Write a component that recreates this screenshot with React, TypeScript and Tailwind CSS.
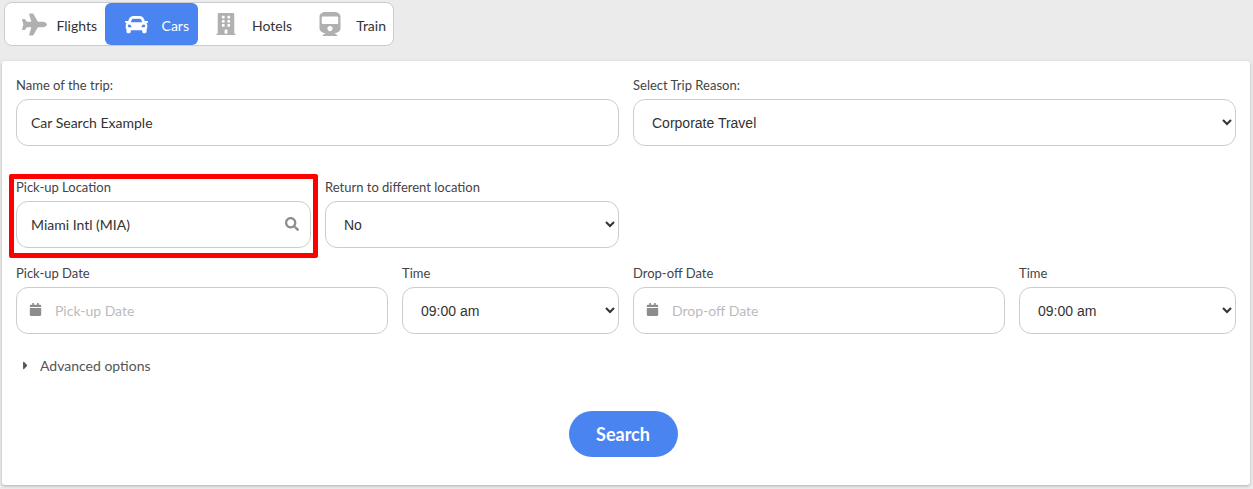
import type { ReactNode } from "react";
import { FaBuilding, FaCalendar, FaCar, FaCaretRight, FaPlane, FaSearch, FaTrain } from "react-icons/fa";

const fieldClass =
  "h-[47px] w-full rounded-xl border border-[#ccc] bg-white text-[14px] text-[#333] outline-none";
const selectClass = `${fieldClass} pl-[14px] pr-1 font-['Liberation_Sans',Arial,sans-serif]`;

const times = ["09:00 am", "09:30 am", "10:00 am"];

function Field({ label, children }: { label: string; children: ReactNode }) {
  return (
    <div className="min-w-0">
      <label className="block h-[23px] text-[13px] leading-[18px] text-[#444]">{label}</label>
      {children}
    </div>
  );
}

function Tab({
  icon,
  label,
  active,
  className,
}: {
  icon: ReactNode;
  label: string;
  active?: boolean;
  className: string;
}) {
  return (
    <div
      className={`flex h-[42px] items-center justify-end rounded-md text-[14px] ${className} ${
        active ? "bg-[#4a84f1] text-white" : "text-[#333]"
      }`}
    >
      <span className={active ? "text-white" : "text-[#b0b0b0]"}>{icon}</span>
      <span className="pt-[2px]">{label}</span>
    </div>
  );
}

export default function App() {
  return (
    <main className="relative h-[489px] w-[1253px] overflow-hidden bg-[#ebebeb] pl-[2px] pt-[2px] font-['Lato',sans-serif]">
      <nav className="ml-[2px] flex h-[44px] w-[390px] items-center rounded-lg border border-[#ccc] bg-white">
        <Tab icon={<FaPlane size={25} />} label="Flights" className="w-[100px] gap-[9px] pr-[8px]" />
        <Tab icon={<FaCar size={23} />} label="Cars" active className="w-[93px] gap-[14px] pr-[9px]" />
        <Tab icon={<FaBuilding size={22} />} label="Hotels" className="w-[103px] gap-[15px] pr-[9px]" />
        <Tab icon={<FaTrain size={24} />} label="Train" className="w-[92px] gap-[14px] pr-[7px]" />
      </nav>

      <section className="mt-[15px] h-[424px] w-[1248px] rounded-[3px] bg-white px-[14px] pt-[15px] shadow-[0_1px_3px_rgba(0,0,0,0.25)]">
        <div className="grid grid-cols-[603px_603px] gap-x-[14px]">
          <Field label="Name of the trip:">
            <input className={`${fieldClass} px-[14px]`} defaultValue="Car Search Example" />
          </Field>
          <Field label="Select Trip Reason:">
            <select className={selectClass} defaultValue="Corporate Travel">
              <option>Corporate Travel</option>
              <option>Personal Travel</option>
            </select>
          </Field>
        </div>

        <div className="mt-[32px] grid grid-cols-[295px_294px] gap-x-[14px]">
          <Field label="Pick-up Location">
            <div className="relative">
              <input className={`${fieldClass} px-[14px]`} defaultValue="Miami Intl (MIA)" />
              <FaSearch size={14} className="absolute right-[12px] top-[16px] text-[#8c8c8c]" />
            </div>
          </Field>
          <Field label="Return to different location">
            <select className={selectClass} defaultValue="No">
              <option>No</option>
              <option>Yes</option>
            </select>
          </Field>
        </div>

        <div className="mt-[16px] grid grid-cols-[372px_217px_372px_217px] gap-x-[14px]">
          <Field label="Pick-up Date">
            <div className="relative">
              <input className={`${fieldClass} pl-[38px] placeholder:text-[#bbb]`} placeholder="Pick-up Date" />
              <FaCalendar size={13} className="absolute left-[13px] top-[16px] text-[#8c8c8c]" />
            </div>
          </Field>
          <Field label="Time">
            <select className={selectClass} defaultValue="09:00 am">
              {times.map((time) => (
                <option key={time}>{time}</option>
              ))}
            </select>
          </Field>
          <Field label="Drop-off Date">
            <div className="relative">
              <input className={`${fieldClass} pl-[38px] placeholder:text-[#bbb]`} placeholder="Drop-off Date" />
              <FaCalendar size={13} className="absolute left-[13px] top-[16px] text-[#8c8c8c]" />
            </div>
          </Field>
          <Field label="Time">
            <select className={selectClass} defaultValue="09:00 am">
              {times.map((time) => (
                <option key={time}>{time}</option>
              ))}
            </select>
          </Field>
        </div>

        <div className="mt-[21px] flex h-[20px] items-center text-[14px] text-[#555]">
          <FaCaretRight size={13} className="ml-[3px] mr-[8px] text-[#555]" />
          Advanced options
        </div>

        <div className="mt-[36px] flex justify-center pr-[6px]">
          <button
            type="button"
            className="h-[46px] w-[109px] rounded-full bg-[#4a84f1] text-[18px] font-bold text-white"
          >
            Search
          </button>
        </div>
      </section>

      {/* annotation drawn over the form */}
      <div className="pointer-events-none absolute left-[9px] top-[174px] h-[84px] w-[309px] rounded-[2px] border-[5px] border-[#fe0000]" />
    </main>
  );
}
